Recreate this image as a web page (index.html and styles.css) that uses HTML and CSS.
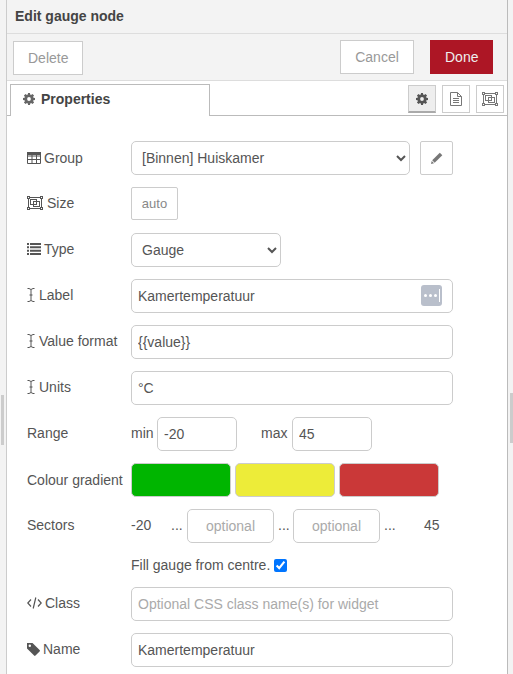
FILE: index.html
```html
<!DOCTYPE html>
<html lang="en">
<head>
    <meta charset="UTF-8">
    <title>Edit gauge node</title>
    <link rel="stylesheet" href="styles.css">
</head>
<body>
    <svg class="defs" width="0" height="0">
        <symbol id="i-cog" viewBox="0 0 14 14"><path fill-rule="evenodd" d="M5.900 0h2.200l.3 1.800 1 .4L11 1.100 12.900 3l-1.100 1.500.4 1L14 5.900v2.200l-1.800.3-.4 1 1.100 1.600L11 12.900l-1.500-1.100-1 .4-.4 1.800H5.900l-.3-1.800-1-.4L3 12.900 1.100 11l1.100-1.500-.4-1L0 8.100V5.900l1.800-.3.4-1L1.100 3 3 1.100l1.500 1.100 1-.4zM7 4.800a2.200 2.200 0 1 0 0 4.400 2.200 2.200 0 0 0 0-4.400z"/></symbol>
        <symbol id="i-size" viewBox="0 0 16 14"><g fill="none" stroke="currentColor"><path d="M2 1.500h12M2 12.500h12M1.500 2v10M14.500 2v10"/><rect x="3.500" y="3.500" width="6" height="5"/><rect x="6.500" y="5.500" width="6" height="5"/></g><g fill="#fff" stroke="currentColor"><rect x=".5" y=".5" width="2" height="2"/><rect x="13.500" y=".5" width="2" height="2"/><rect x=".5" y="11.500" width="2" height="2"/><rect x="13.500" y="11.500" width="2" height="2"/></g></symbol>
        <symbol id="i-cursor" viewBox="0 0 8 14"><path fill="none" stroke="currentColor" d="M.5.500h1.500l2 1 2-1h1.500M4 1.500v11M.5 13.500h1.500l2-1 2 1h1.500M2.500 7h3"/></symbol>
    </svg>

    <div class="tray">
        <div class="tray-title">Edit gauge node</div>

        <div class="tray-toolbar">
            <button class="btn btn-delete">Delete</button>
            <span class="spacer"></span>
            <button class="btn btn-cancel">Cancel</button>
            <button class="btn btn-done">Done</button>
        </div>

        <div class="tabs">
            <div class="tab"><svg class="tab-cog"><use href="#i-cog"/></svg>Properties</div>
            <span class="spacer"></span>
            <a class="tab-link active"><svg class="link-cog"><use href="#i-cog"/></svg></a>
            <a class="tab-link">
                <svg width="12" height="14" viewBox="0 0 12 14"><path fill="none" stroke="currentColor" d="M.5.500h7l4 4v9H.5zM7.500.500v4h4M3 6.500h6M3 8.500h6M3 10.500h6"/></svg>
            </a>
            <a class="tab-link"><svg width="16" height="14"><use href="#i-size"/></svg></a>
        </div>

        <div class="form">
            <div class="row">
                <label class="label-mid">
                    <svg class="ic" width="14" height="12" viewBox="0 0 14 12"><path fill="none" stroke="currentColor" d="M.5.500h13v11H.500zM.5 4h13M.5 7.500h13M5 .5v11M9.500.5v11"/><path fill="currentColor" d="M0 0h14v3H0z"/></svg>
                    Group
                </label>
                <select class="field group-select"><option>[Binnen] Huiskamer</option></select>
                <button class="edit-btn">
                    <svg width="12" height="12" viewBox="0 0 12 12"><path fill="#777" d="M8.800.700l2.500 2.500-7.600 7.600-2.500-2.500z"/><path fill="#777" d="M.7 9l2.300 2.300-3 .7z"/></svg>
                </button>
            </div>
            <div class="row">
                <label><svg class="ic ic-size" width="16" height="14"><use href="#i-size"/></svg>Size</label>
                <button class="size-btn">auto</button>
            </div>
            <div class="row">
                <label>
                    <svg class="ic" width="14" height="12" viewBox="0 0 14 12"><path fill="currentColor" d="M0 0h2v2H0zM3 0h11v2H3zM0 3.300h2v2H0zM3 3.300h11v2H3zM0 6.700h2v2H0zM3 6.700h11v2H3zM0 10h2v2H0zM3 10h11v2H3z"/></svg>
                    Type
                </label>
                <select class="field type-select"><option>Gauge</option></select>
            </div>
            <div class="row">
                <label><svg class="ic cursor" width="8" height="14"><use href="#i-cursor"/></svg>Label</label>
                <div class="input-wrap">
                    <input class="field wide" type="text" value="Kamertemperatuur">
                    <span class="env-btn"><i></i><i></i><i></i><b></b></span>
                </div>
            </div>
            <div class="row">
                <label><svg class="ic cursor" width="8" height="14"><use href="#i-cursor"/></svg>Value format</label>
                <input class="field wide" type="text" value="{{value}}">
            </div>
            <div class="row">
                <label><svg class="ic cursor" width="8" height="14"><use href="#i-cursor"/></svg>Units</label>
                <input class="field wide" type="text" value="°C">
            </div>
            <div class="row">
                <label>Range</label>
                <span class="unit">min</span>
                <input class="field range" type="text" value="-20">
                <span class="unit unit-max">max</span>
                <input class="field range" type="text" value="45">
            </div>
            <div class="row">
                <label class="label-mid">Colour gradient</label>
                <div class="swatches">
                    <span class="swatch green"></span>
                    <span class="swatch yellow"></span>
                    <span class="swatch red"></span>
                </div>
            </div>
            <div class="row">
                <label>Sectors</label>
                <span class="sector-min">-20</span>
                <span class="dots">...</span>
                <input class="field sector" type="text" placeholder="optional">
                <span class="dots dots-mid">...</span>
                <input class="field sector" type="text" placeholder="optional">
                <span class="dots dots-last">...</span>
                <span class="sector-max">45</span>
            </div>
            <div class="row check-row">
                <span>Fill gauge from centre.</span>
                <input class="check" type="checkbox" checked>
            </div>
            <div class="row">
                <label>
                    <svg class="ic" width="15" height="12" viewBox="0 0 15 12"><path fill="none" stroke="currentColor" stroke-width="1.200" d="M4 2.500L.8 6 4 9.500M11 2.500L14.200 6 11 9.500M8.800.5L6.200 11.500"/></svg>
                    Class
                </label>
                <input class="field wide" type="text" placeholder="Optional CSS class name(s) for widget">
            </div>
            <div class="row">
                <label>
                    <svg class="ic" width="13" height="13" viewBox="0 0 13 13"><path fill-rule="evenodd" fill="currentColor" d="M0 0h5.500l7.100 7.100a1 1 0 0 1 0 1.400l-4.100 4.100a1 1 0 0 1-1.400 0L0 5.500zM2.800 1.600a1.200 1.200 0 1 0 0 2.400 1.200 1.200 0 0 0 0-2.400z"/></svg>
                    Name
                </label>
                <input class="field wide" type="text" value="Kamertemperatuur">
            </div>
        </div>
    </div>

    <span class="grip grip-left"></span>
    <span class="grip grip-right"></span>
</body>
</html>
```

FILE: styles.css
```css
* {
    box-sizing: border-box;
}

html, body {
    height: 100%;
}

body {
    margin: 0;
    overflow: hidden;
    background-color: #f3f3f3;
    font-family: "Liberation Sans", Arial, sans-serif;
    font-size: 14px;
    color: #555;
}

.defs {
    position: absolute;
}

.tray {
    margin-left: 6px;
    width: 502px;
    height: 674px;
    background-color: #fff;
    border-left: 1px solid #ccc;
    border-right: 1px solid #bbb;
}

.spacer {
    flex: 1;
}

.tray-title {
    height: 34px;
    padding: 8px 8px 0;
    background-color: #f3f3f3;
    border-bottom: 1px solid #ddd;
    font-weight: bold;
    color: #444;
}

.tray-toolbar {
    display: flex;
    align-items: center;
    height: 47px;
    padding: 6px 14px 6px 6px;
    gap: 16px;
    background-color: #f3f3f3;
    border-bottom: 1px solid #ddd;
}

.btn {
    height: 34px;
    padding: 0 14px;
    background-color: #fff;
    border: 1px solid #ccc;
    font-family: inherit;
    font-size: 14px;
    color: #999;
}

.btn-delete {
    width: 70px;
    margin-top: 2px;
}

.btn-cancel {
    width: 74px;
}

.btn-done {
    width: 63px;
    background-color: #ad1625;
    border-color: #ad1625;
    color: #eee;
}

.tabs {
    display: flex;
    align-items: flex-end;
    height: 35px;
    padding-left: 3px;
    border-bottom: 1px solid #bbb;
}

.tab {
    display: flex;
    align-items: center;
    width: 200px;
    height: 32px;
    margin-bottom: -1px;
    padding: 0 12px 3px;
    background-color: #fff;
    border: 1px solid #bbb;
    border-bottom: none;
    font-weight: bold;
    color: #444;
}

.tab-cog {
    width: 12px;
    height: 12px;
    margin-right: 6px;
    fill: #666;
}

.tab-link {
    display: flex;
    align-items: center;
    justify-content: center;
    width: 28px;
    height: 28px;
    margin: 0 6px 2px 0;
    border: 1px solid #ccc;
    color: #777;
}

.tab-link.active {
    background-color: #eee;
    border-bottom: 2px solid #aaa;
}

.tab-link:last-child {
    margin-right: 3px;
}

.link-cog {
    width: 12px;
    height: 12px;
    fill: #555;
}

.form {
    padding: 25px 0 0 20px;
}

.row {
    display: flex;
    align-items: center;
    height: 34px;
    margin-bottom: 12px;
}

.row > label {
    display: flex;
    align-items: center;
    flex: none;
    width: 104px;
    padding-bottom: 2px;
}

.row > label.label-mid {
    padding-bottom: 0;
}

.ic {
    flex: none;
    margin-right: 3px;
}

.ic-size {
    margin-right: 4px;
}

.cursor {
    margin-right: 4px;
}

.field {
    height: 34px;
    padding: 0 6px;
    background-color: #fff;
    border: 1px solid #ccc;
    border-radius: 5px;
    font-family: inherit;
    font-size: 14px;
    color: #555;
}

.field::placeholder {
    color: #aaa;
}

.group-select {
    width: 279px;
}

.type-select {
    width: 150px;
}

.edit-btn {
    display: flex;
    align-items: center;
    justify-content: center;
    width: 33px;
    height: 34px;
    margin-left: 10px;
    padding: 0;
    background-color: #fff;
    border: 1px solid #ccc;
    border-radius: 2px;
}

.size-btn {
    width: 47px;
    height: 33px;
    margin-bottom: 1px;
    padding: 0;
    background-color: #fff;
    border: 1px solid #ccc;
    border-radius: 2px;
    font-family: inherit;
    font-size: 13px;
    color: #888;
}

.wide,
.input-wrap {
    width: 322px;
}

.input-wrap {
    position: relative;
}

.env-btn {
    position: absolute;
    top: 6px;
    right: 11px;
    display: flex;
    align-items: center;
    gap: 2px;
    width: 21px;
    height: 21px;
    padding-left: 3px;
    background-color: #b9bfcb;
    border-radius: 3px;
}

.env-btn i {
    width: 3px;
    height: 3px;
    background-color: #fff;
    border-radius: 50%;
}

.env-btn b {
    width: 1px;
    height: 13px;
    background-color: #fff;
}

.unit {
    width: 26px;
    padding-bottom: 2px;
}

.unit-max {
    width: 31px;
    margin-left: 24px;
}

.range {
    width: 80px;
}

.swatches {
    display: flex;
    gap: 4px;
}

.swatch {
    width: 100px;
    height: 34px;
    border: 1px solid #ccc;
    border-radius: 5px;
}

.green {
    background-color: #00b500;
}

.yellow {
    background-color: #edec39;
}

.red {
    background-color: #ca3838;
}

.sector-min {
    width: 40px;
    padding-bottom: 2px;
}

.dots {
    width: 16px;
    padding-bottom: 2px;
}

.dots-mid {
    width: 15px;
    margin-left: 4px;
}

.dots-last {
    width: 15px;
    margin-left: 4px;
}

.sector {
    width: 87px;
    text-align: center;
}

.sector-max {
    margin-left: 25px;
    padding-bottom: 2px;
}

.check-row {
    height: 20px;
    padding-left: 104px;
}

.check {
    width: 13px;
    height: 13px;
    margin: 0 0 0 4px;
    accent-color: #0075ff;
}

.grip {
    position: absolute;
    width: 3px;
    height: 50px;
    background-color: #ccc;
}

.grip-left {
    top: 395px;
    left: 1px;
}

.grip-right {
    top: 393px;
    right: 0;
}
```
